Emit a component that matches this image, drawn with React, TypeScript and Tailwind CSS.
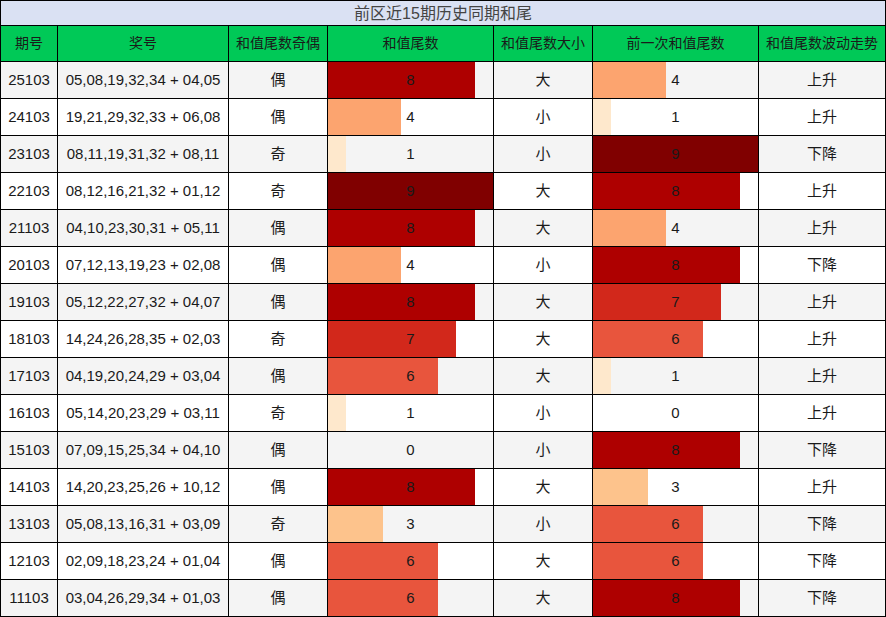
const rows: [string, string, string, number, string, number, string][] = [
  ["25103", "05,08,19,32,34 + 04,05", "偶", 8, "大", 4, "上升"],
  ["24103", "19,21,29,32,33 + 06,08", "偶", 4, "小", 1, "上升"],
  ["23103", "08,11,19,31,32 + 08,11", "奇", 1, "小", 9, "下降"],
  ["22103", "08,12,16,21,32 + 01,12", "奇", 9, "大", 8, "上升"],
  ["21103", "04,10,23,30,31 + 05,11", "偶", 8, "大", 4, "上升"],
  ["20103", "07,12,13,19,23 + 02,08", "偶", 4, "小", 8, "下降"],
  ["19103", "05,12,22,27,32 + 04,07", "偶", 8, "大", 7, "上升"],
  ["18103", "14,24,26,28,35 + 02,03", "奇", 7, "大", 6, "上升"],
  ["17103", "04,19,20,24,29 + 03,04", "偶", 6, "大", 1, "上升"],
  ["16103", "05,14,20,23,29 + 03,11", "奇", 1, "小", 0, "上升"],
  ["15103", "07,09,15,25,34 + 04,10", "偶", 0, "小", 8, "下降"],
  ["14103", "14,20,23,25,26 + 10,12", "偶", 8, "大", 3, "上升"],
  ["13103", "05,08,13,16,31 + 03,09", "奇", 3, "小", 6, "下降"],
  ["12103", "02,09,18,23,24 + 01,04", "偶", 6, "大", 6, "下降"],
  ["11103", "03,04,26,29,34 + 01,03", "偶", 6, "大", 8, "下降"],
];

const barColor: Record<number, string> = {
  0: "bg-transparent",
  1: "bg-[#fee8cc]",
  2: "bg-[#fdd6a8]",
  3: "bg-[#fdc38c]",
  4: "bg-[#fca46f]",
  5: "bg-[#f57f55]",
  6: "bg-[#e8553d]",
  7: "bg-[#d2281b]",
  8: "bg-[#ae0000]",
  9: "bg-[#800000]",
};

const cols = "grid grid-cols-[57px_171px_99px_166px_99px_166px_126px]";
const cell = "flex items-center justify-center border-r border-black";

function BarCell({ value }: { value: number }) {
  return (
    <div className="relative border-r border-black">
      <div
        className={`absolute left-0 top-0 h-full ${barColor[value]}`}
        style={{ width: `${(value / 9) * 100}%` }}
      />
      <div className="relative flex h-full items-center justify-center pt-px">{value}</div>
    </div>
  );
}

export default function App() {
  return (
    <div
      className="w-[886px] border border-black text-[15px] text-[#1a1a1a]"
      style={{ fontFamily: '"Liberation Sans", "Noto Sans CJK SC", sans-serif' }}
    >
      <div className="flex h-[25px] items-center justify-center border-b border-black bg-[#dae1f3] pt-[2px] text-[16px] text-[#444]">
        前区近15期历史同期和尾
      </div>
      <div className={`${cols} h-[36px] border-b border-black bg-[#00c957] text-[14px]`}>
        <div className={cell}>期号</div>
        <div className={cell}>奖号</div>
        <div className={cell}>和值尾数奇偶</div>
        <div className={cell}>和值尾数</div>
        <div className={cell}>和值尾数大小</div>
        <div className={cell}>前一次和值尾数</div>
        <div className="flex items-center justify-center">和值尾数波动走势</div>
      </div>
      {rows.map((r, i) => (
        <div
          key={r[0]}
          className={`${cols} ${i === rows.length - 1 ? "h-[36px]" : "h-[37px] border-b border-black"} ${
            i % 2 === 0 ? "bg-[#f4f4f4]" : "bg-white"
          }`}
        >
          <div className={`${cell} pt-px`}>{r[0]}</div>
          <div className={`${cell} pt-px`}>{r[1]}</div>
          <div className={`${cell} pt-px`}>{r[2]}</div>
          <BarCell value={r[3]} />
          <div className={`${cell} pt-px`}>{r[4]}</div>
          <BarCell value={r[5]} />
          <div className="flex items-center justify-center pt-px">{r[6]}</div>
        </div>
      ))}
    </div>
  );
}
